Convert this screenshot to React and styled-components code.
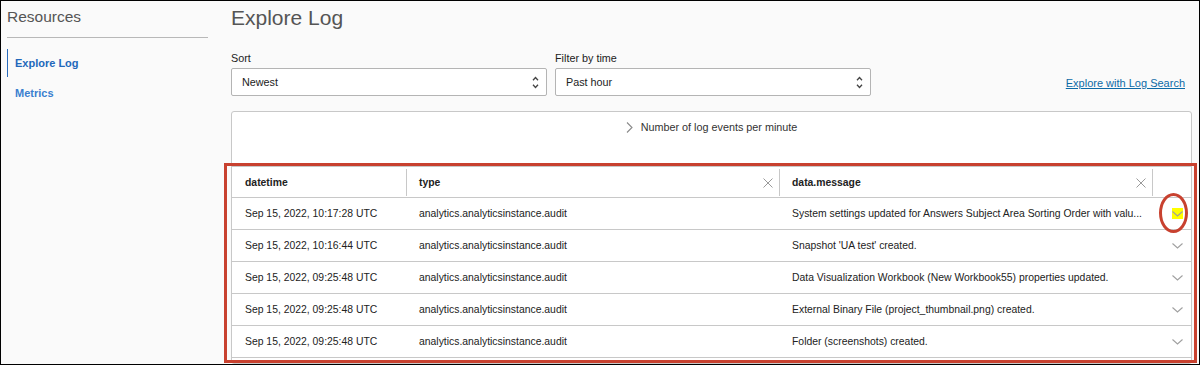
import React from "react";
import styled, { createGlobalStyle } from "styled-components";

const Global = createGlobalStyle`
  html, body { margin: 0; padding: 0; background: #fff; }
  body { font-family: "Liberation Sans", Arial, sans-serif; }
  * { box-sizing: border-box; }
`;

const RED = "#c8412f";

const Frame = styled.div`
  position: relative;
  width: 1200px;
  height: 365px;
  border: 1px solid #000;
  background: #fafafa;
  display: flex;
  overflow: hidden;
  font-family: "Liberation Sans", Arial, sans-serif;
  color: #333;
`;

const Sidebar = styled.aside`
  width: 215px;
  flex: none;
  padding: 6px 0 0 6px;
`;

const SideTitle = styled.div`
  font-size: 15.5px;
  line-height: 20px;
  color: #555;
`;

const SideRule = styled.div`
  width: 201px;
  height: 1px;
  margin-top: 10px;
  background: #b8b8b8;
`;

const Nav = styled.nav`
  margin-top: 11px;
  display: flex;
  flex-direction: column;
  gap: 2px;
`;

const NavItem = styled.a`
  display: block;
  height: 28px;
  line-height: 28px;
  padding-left: 7px;
  border-left: 1px solid ${(p) => (p.$active ? "#2a6cbd" : "transparent")};
  font-size: 11px;
  font-weight: bold;
  color: ${(p) => (p.$active ? "#2268bb" : "#3b7fcf")};
  text-decoration: none;
`;

const Main = styled.main`
  flex: 1;
  min-width: 0;
  display: flex;
  flex-direction: column;
  padding: 4px 7px 0 15px;
`;

const Title = styled.h1`
  margin: 0;
  font-size: 21px;
  line-height: 26px;
  font-weight: normal;
  color: #555;
`;

const Controls = styled.div`
  margin-top: 20px;
  display: flex;
  align-items: flex-end;
  gap: 8px;
`;

const Field = styled.div`
  display: flex;
  flex-direction: column;
  width: 316px;
`;

const Label = styled.label`
  font-size: 10.8px;
  line-height: 14px;
  color: #222;
  margin-bottom: 3px;
`;

const SelectBox = styled.div`
  height: 28px;
  border: 1px solid #b4b4b4;
  border-radius: 2px;
  background: #fff;
  display: flex;
  align-items: center;
  justify-content: space-between;
  padding: 0 7px 0 10px;
  font-size: 10.8px;
  color: #222;
`;

const LogLink = styled.a`
  margin-left: auto;
  margin-right: 7px;
  padding-bottom: 6px;
  font-size: 11px;
  line-height: 14px;
  color: #0d6aa6;
  text-decoration: underline;
`;

const Card = styled.section`
  margin-top: 15px;
  flex: 1;
  border: 1px solid #c8c8c8;
  border-radius: 3px;
  background: #fff;
  display: flex;
  flex-direction: column;
`;

const ChartToggle = styled.div`
  height: 54px;
  padding-top: 8px;
  display: flex;
  justify-content: center;
  align-items: flex-start;
  gap: 8px;
  font-size: 10.8px;
  line-height: 14px;
  color: #333;
`;

const Table = styled.div`
  border-top: 1px solid #c8c8c8;
`;

const GridRow = styled.div`
  display: grid;
  grid-template-columns: 175px 373px 373px 1fr;
  height: ${(p) => (p.$head ? "31px" : "32px")};
  border-bottom: 1px solid #c8c8c8;
  font-size: 10.4px;
  color: #222;
`;

const HeadCell = styled.div`
  display: flex;
  align-items: center;
  justify-content: space-between;
  padding: 0 6px 0 ${(p) => p.$pad || 12}px;
  font-weight: bold;
  margin: 2px 0 1px;
  border-right: ${(p) => (p.$last ? "none" : "1px solid #c8c8c8")};
`;

const Cell = styled.div`
  display: flex;
  align-items: center;
  padding: 0 8px 0 ${(p) => p.$pad || 12}px;
  justify-content: ${(p) => (p.$end ? "flex-end" : "flex-start")};
  white-space: nowrap;
  overflow: hidden;
`;

const ChevronBox = styled.span`
  display: inline-flex;
  width: 11px;
  height: 11px;
  background: ${(p) => (p.$highlight ? "#ffff00" : "transparent")};
`;

const RedBox = styled.div`
  position: absolute;
  left: 223px;
  top: 162px;
  width: 973px;
  height: 200px;
  border: 3px solid ${RED};
  pointer-events: none;
`;

const RedEllipse = styled.div`
  position: absolute;
  left: 1158px;
  top: 192px;
  width: 29px;
  height: 40px;
  border: 3px solid ${RED};
  border-radius: 50%;
  pointer-events: none;
`;

const UpDown = () => (
  <svg width="7" height="13" viewBox="0 0 7 13" fill="none" stroke="#444" strokeWidth="1.3">
    <path d="M1 4.2 L3.5 1.5 L6 4.2" />
    <path d="M1 8.8 L3.5 11.5 L6 8.8" />
  </svg>
);

const XIcon = () => (
  <svg width="10" height="10" viewBox="0 0 10 10" stroke="#9a9a9a" strokeWidth="1">
    <path d="M0.5 0.5 L9.5 9.5 M9.5 0.5 L0.5 9.5" />
  </svg>
);

const ChevronDown = () => (
  <svg width="11" height="11" viewBox="0 0 11 11" fill="none" stroke="#a0a0a0" strokeWidth="1.1">
    <path d="M0.5 3.5 L5.5 8 L10.5 3.5" />
  </svg>
);

const ChevronRight = () => (
  <svg width="7" height="11" viewBox="0 0 7 11" fill="none" stroke="#8a8a8a" strokeWidth="1.1" style={{ marginTop: 2 }}>
    <path d="M1 0.5 L6 5.5 L1 10.5" />
  </svg>
);

const rows = [
  ["Sep 15, 2022, 10:17:28 UTC", "analytics.analyticsinstance.audit", "System settings updated for Answers Subject Area Sorting Order with valu..."],
  ["Sep 15, 2022, 10:16:44 UTC", "analytics.analyticsinstance.audit", "Snapshot 'UA test' created."],
  ["Sep 15, 2022, 09:25:48 UTC", "analytics.analyticsinstance.audit", "Data Visualization Workbook (New Workbook55) properties updated."],
  ["Sep 15, 2022, 09:25:48 UTC", "analytics.analyticsinstance.audit", "External Binary File (project_thumbnail.png) created."],
  ["Sep 15, 2022, 09:25:48 UTC", "analytics.analyticsinstance.audit", "Folder (screenshots) created."],
];

export default function App() {
  return (
    <>
      <Global />
      <Frame>
        <Sidebar>
          <SideTitle>Resources</SideTitle>
          <SideRule />
          <Nav>
            <NavItem $active>Explore Log</NavItem>
            <NavItem>Metrics</NavItem>
          </Nav>
        </Sidebar>
        <Main>
          <Title>Explore Log</Title>
          <Controls>
            <Field>
              <Label>Sort</Label>
              <SelectBox>
                <span>Newest</span>
                <UpDown />
              </SelectBox>
            </Field>
            <Field>
              <Label>Filter by time</Label>
              <SelectBox>
                <span>Past hour</span>
                <UpDown />
              </SelectBox>
            </Field>
            <LogLink>Explore with Log Search</LogLink>
          </Controls>
          <Card>
            <ChartToggle>
              <ChevronRight />
              <span>Number of log events per minute</span>
            </ChartToggle>
            <Table>
              <GridRow $head>
                <HeadCell $pad={13}>datetime</HeadCell>
                <HeadCell>
                  type
                  <XIcon />
                </HeadCell>
                <HeadCell>
                  data.message
                  <XIcon />
                </HeadCell>
                <HeadCell $last />
              </GridRow>
              {rows.map((r, i) => (
                <GridRow key={i}>
                  <Cell $pad={13}>{r[0]}</Cell>
                  <Cell>{r[1]}</Cell>
                  <Cell>{r[2]}</Cell>
                  <Cell $end>
                    <ChevronBox $highlight={i === 0}>
                      <ChevronDown />
                    </ChevronBox>
                  </Cell>
                </GridRow>
              ))}
            </Table>
          </Card>
        </Main>
        <RedBox />
        <RedEllipse />
      </Frame>
    </>
  );
}
